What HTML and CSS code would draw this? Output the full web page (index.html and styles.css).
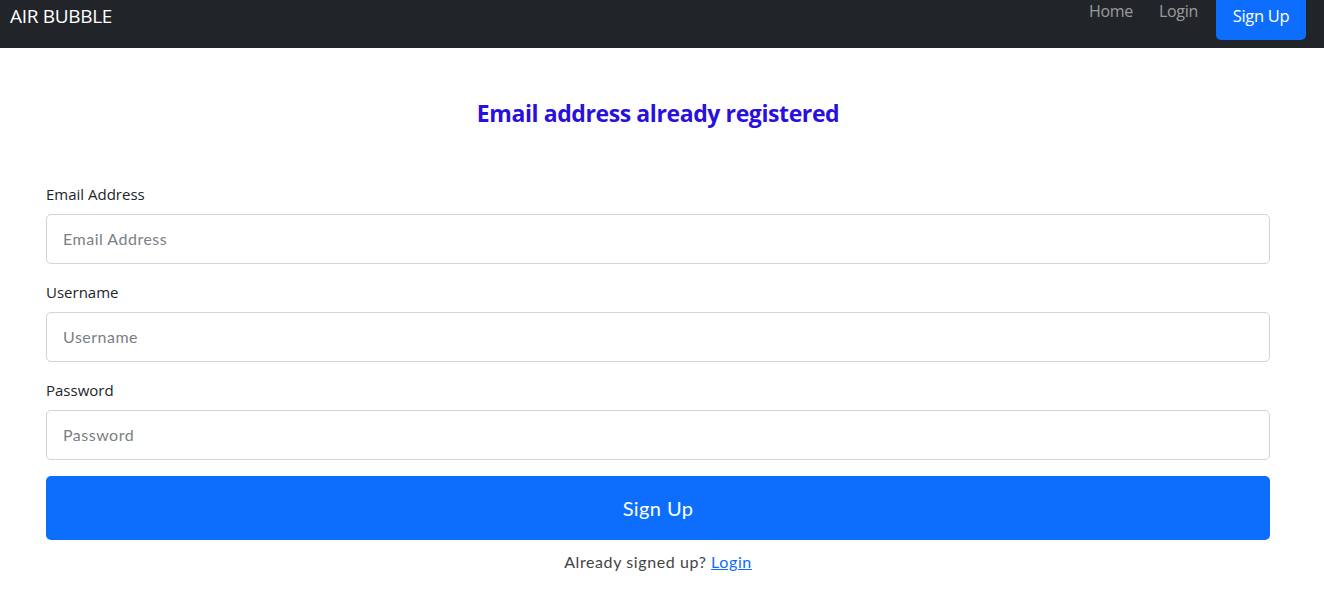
FILE: index.html
```html
<!DOCTYPE html>
<html lang="en">
<head>
<meta charset="utf-8">
<title>AIR BUBBLE - Sign Up</title>
<link rel="stylesheet" href="styles.css">
</head>
<body>
<nav class="navbar">
  <a class="brand" href="#">AIR BUBBLE</a>
  <div class="nav-links">
    <a class="nav-link" href="#">Home</a>
    <a class="nav-link" href="#">Login</a>
    <a class="nav-btn" href="#">Sign Up</a>
  </div>
</nav>
<main class="page">
  <h1 class="alert-title">Email address already registered</h1>
  <form class="signup-form">
    <label class="field-label" for="email">Email Address</label>
    <input class="field-input" id="email" type="email" placeholder="Email Address">
    <label class="field-label" for="username">Username</label>
    <input class="field-input" id="username" type="text" placeholder="Username">
    <label class="field-label" for="password">Password</label>
    <input class="field-input" id="password" type="password" placeholder="Password">
    <button class="submit-btn" type="button">Sign Up</button>
    <p class="form-foot">Already signed up? <a href="#">Login</a></p>
  </form>
</main>
</body>
</html>
```

FILE: styles.css
```css
* { box-sizing: border-box; }
html, body { margin: 0; padding: 0; background: #fff; }
body { font-family: "Open Sans", "Noto Sans", sans-serif; color: #212529; }

.navbar {
  height: 48px;
  background: #212529;
  display: flex;
  justify-content: space-between;
  align-items: flex-start;
  padding: 0 18px 0 10px;
}
.brand {
  color: #fff;
  text-decoration: none;
  font-size: 19px;
  line-height: 32px;
  letter-spacing: -0.3px;
}
.nav-links { display: flex; align-items: flex-start; }
.nav-link {
  color: rgba(255,255,255,0.55);
  text-decoration: none;
  font-size: 16px;
  line-height: 22px;
  margin-right: 26px;
  letter-spacing: -0.3px;
}
.nav-link + .nav-link { margin-right: 18px; }
.nav-btn {
  display: block;
  height: 40px;
  width: 90px;
  text-align: center;
  background: #0d6efd;
  color: #fff;
  text-decoration: none;
  font-size: 16.5px;
  line-height: 32px;
  border-radius: 0 0 5px 5px;
  letter-spacing: -0.3px;
}

.page { padding: 0 54px 0 46px; }
.alert-title {
  margin: 51px 0 54px;
  text-align: center;
  color: #2a10db;
  font-size: 23px;
  line-height: 29px;
  font-weight: 700;
  letter-spacing: -0.4px;
}
.signup-form { display: flex; flex-direction: column; }
.field-label {
  font-size: 15px;
  line-height: 25px;
  margin-bottom: 7px;
  color: #212529;
}
.field-input {
  height: 50px;
  border: 1px solid #ced4da;
  border-radius: 5px;
  padding: 0 16px 2px;
  font-family: "Lato", sans-serif;
  font-size: 16px;
  color: #212529;
  margin-bottom: 16px;
  outline: none;
}
.field-input::placeholder { color: #7a7f85; letter-spacing: 0.5px; }
.submit-btn {
  height: 64px;
  border: none;
  border-radius: 5px;
  background: #0d6efd;
  color: #fff;
  font-family: "Lato", sans-serif;
  font-size: 20px;
  letter-spacing: 0.4px;
  padding-bottom: 2px;
}
.form-foot {
  margin: 10px 0 0;
  text-align: center;
  font-family: "Lato", sans-serif;
  font-size: 16px;
  line-height: 24px;
  color: #444;
  letter-spacing: 0.6px;
}
.form-foot a { color: #0d6efd; }
```
